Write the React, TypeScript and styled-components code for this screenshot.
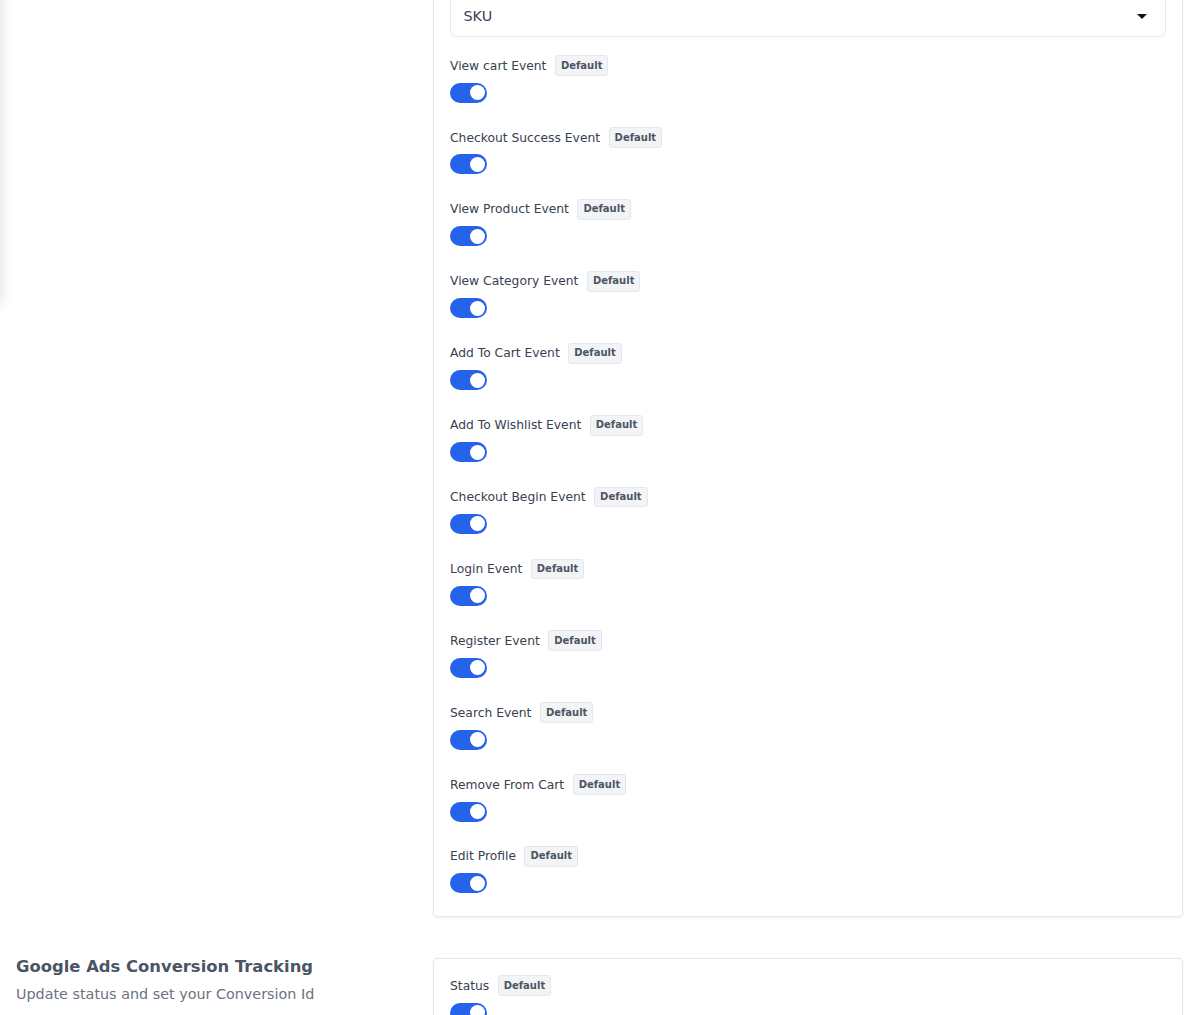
import React from 'react';
import styled, { createGlobalStyle } from 'styled-components';

const GlobalStyle = createGlobalStyle`
  html, body {
    margin: 0;
    padding: 0;
    background: #ffffff;
    font-family: "DejaVu Sans", "Noto Sans", sans-serif;
    color: #374151;
  }
  * { box-sizing: border-box; }
`;

// Off-canvas drawer: only its shadow shows at the left edge of the viewport
const Drawer = styled.aside`
  position: fixed;
  left: -320px;
  top: -20px;
  width: 320px;
  height: 326px;
  background: #ffffff;
  border-radius: 8px;
  box-shadow: 0 0 14px rgba(0, 0, 0, 0.16);
`;

const Page = styled.main`
  margin-top: -50px;
  padding: 0 17px 40px 16px;
  display: flex;
  flex-direction: column;
  gap: 41px;
`;

const Section = styled.section`
  display: grid;
  grid-template-columns: 401px 1fr;
  column-gap: 16px;
  align-items: start;
`;

const SectionIntro = styled.div`
  display: flex;
  flex-direction: column;
  gap: 7px;
`;

const SectionTitle = styled.h2`
  margin: 0;
  font-size: 16.4px;
  line-height: 18px;
  font-weight: 700;
  color: #4b5563;
`;

const SectionText = styled.p`
  margin: 0;
  font-size: 14.35px;
  line-height: 22px;
  color: #6b7280;
`;

const Card = styled.div`
  background: #ffffff;
  border: 1px solid #e5e7eb;
  border-radius: 4px;
  box-shadow: 0 1px 3px rgba(0, 0, 0, 0.07);
  padding: 16.5px 16px 22.5px;
  display: flex;
  flex-direction: column;
`;

const Field = styled.div<{ $mt?: number }>`
  display: flex;
  flex-direction: column;
  align-items: flex-start;
  gap: 6.5px;
  margin-top: ${p => p.$mt ?? 0}px;
`;

const FieldHead = styled.div`
  display: flex;
  align-items: center;
  gap: 8.5px;
  height: 20.8px;
`;

const Label = styled.span`
  font-size: 12.3px;
  line-height: 16px;
  color: #374151;
`;

const Badge = styled.span`
  display: inline-flex;
  align-items: center;
  height: 20.8px;
  padding: 0 5px 1px;
  font-size: 10px;
  font-weight: 700;
  color: #4b5563;
  background: #f3f4f6;
  border: 1px solid #e5e7eb;
  border-radius: 3px;
`;

const Switch = styled.button<{ $on: boolean }>`
  position: relative;
  width: 37px;
  height: 20px;
  padding: 0;
  border: none;
  border-radius: 10px;
  background: ${p => (p.$on ? '#2563eb' : '#d1d5db')};
  cursor: pointer;

  &::after {
    content: '';
    position: absolute;
    top: 2.5px;
    left: ${p => (p.$on ? '19.5px' : '2.5px')};
    width: 15px;
    height: 15px;
    border-radius: 50%;
    background: #ffffff;
  }
`;

const Select = styled.div`
  width: 100%;
  height: 42px;
  display: flex;
  align-items: center;
  justify-content: space-between;
  padding: 0 18px 0 12.5px;
  border: 1px solid #e5e7eb;
  border-radius: 6px;
  background: #ffffff;
  font-size: 14.35px;
  color: #374151;
`;

const Caret = styled.span`
  width: 0;
  height: 0;
  border-left: 5px solid transparent;
  border-right: 5px solid transparent;
  border-top: 5.5px solid #111111;
  margin-top: 2px;
`;

const ToggleField: React.FC<{ label: string; mt?: number }> = ({ label, mt }) => {
  const [on, setOn] = React.useState(true);
  return (
    <Field $mt={mt}>
      <FieldHead>
        <Label>{label}</Label>
        <Badge>Default</Badge>
      </FieldHead>
      <Switch type="button" role="switch" aria-checked={on} aria-label={label} $on={on} onClick={() => setOn(v => !v)} />
    </Field>
  );
};

const events = [
  'View cart Event',
  'Checkout Success Event',
  'View Product Event',
  'View Category Event',
  'Add To Cart Event',
  'Add To Wishlist Event',
  'Checkout Begin Event',
  'Login Event',
  'Register Event',
  'Search Event',
  'Remove From Cart',
  'Edit Profile',
];

export default function App() {
  return (
    <>
      <GlobalStyle />
      <Drawer />
      <Page>
        <Section>
          <SectionIntro />
          <Card>
            <Field>
              <FieldHead>
                <Label>Product Identifier</Label>
                <Badge>Default</Badge>
              </FieldHead>
              <Select>
                <span>SKU</span>
                <Caret />
              </Select>
            </Field>
            {events.map((e, i) => (
              <ToggleField key={e} label={e} mt={i === 0 ? 18.5 : 24.6} />
            ))}
          </Card>
        </Section>

        <Section>
          <SectionIntro>
            <SectionTitle>Google Ads Conversion Tracking</SectionTitle>
            <SectionText>Update status and set your Conversion Id</SectionText>
          </SectionIntro>
          <Card>
            <ToggleField label="Status" />
            <Field $mt={24.6}>
              <FieldHead>
                <Label>Conversion Id</Label>
                <Badge>Default</Badge>
              </FieldHead>
              <Select>
                <span>AW-</span>
              </Select>
            </Field>
          </Card>
        </Section>
      </Page>
    </>
  );
}
